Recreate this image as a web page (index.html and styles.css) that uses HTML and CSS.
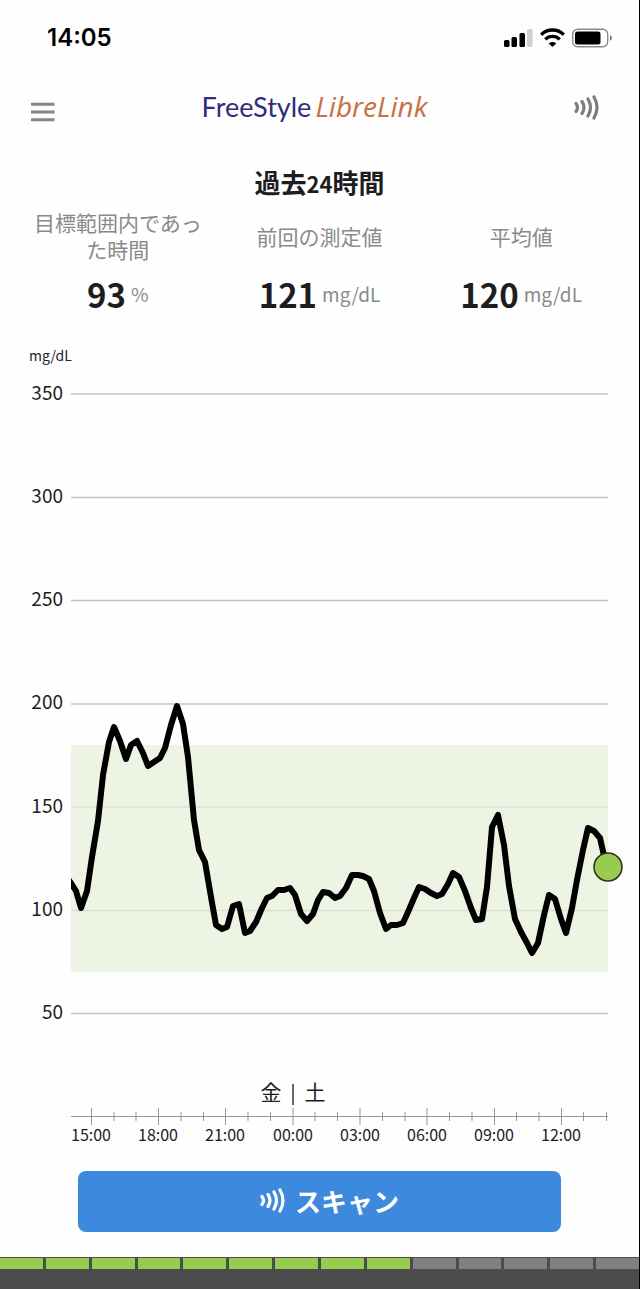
FILE: index.html
```html
<!DOCTYPE html>
<html lang="ja">
<head>
<meta charset="utf-8">
<meta name="viewport" content="width=device-width, initial-scale=1">
<title>FreeStyle LibreLink</title>
<link rel="stylesheet" href="styles.css">
</head>
<body>
<div class="app">
  <div class="status">
    <time class="clock">14:05</time>
    <svg class="status-icons" width="110" height="22" viewBox="0 0 110 22" aria-hidden="true">
      <rect x="0" y="13" width="5.5" height="7" rx="1.5"/>
      <rect x="7.5" y="10" width="5.5" height="10" rx="1.5"/>
      <rect x="15.5" y="6" width="5.5" height="14" rx="1.5"/>
      <rect x="23" y="2" width="5.5" height="18" rx="1.5" fill="#d0d0d0"/>
      <g fill="none" stroke="#000" stroke-width="3.4">
        <path d="M37.2 7.7a16 16 0 0 1 22.6 0"/>
        <path d="M41.3 12.4a10.2 10.2 0 0 1 14.4 0"/>
      </g>
      <path d="M48.5 20l-3.7-3.6a5.4 5.4 0 0 1 7.4 0z"/>
      <rect x="68.7" y="2.2" width="35" height="17.6" rx="5" fill="none" stroke="#8a8a8a" stroke-width="1.4"/>
      <rect x="71" y="4.5" width="25.5" height="13" rx="2.5"/>
      <path d="M106 8q4 3 0 6z" fill="#777"/>
    </svg>
  </div>

  <header class="header">
    <button class="icon-button" type="button" aria-label="メニュー">
      <svg width="24" height="20" viewBox="0 0 24 20"><path d="M0 2.2h23.5M0 10h23.5M0 17.8h23.5" stroke="#858585" stroke-width="3"/></svg>
    </button>
    <div class="logo"><span class="logo-free">FreeStyle</span><span class="logo-libre">LibreLink</span></div>
    <button class="icon-button scan-icon" type="button" aria-label="スキャン">
      <svg width="26" height="26" viewBox="0 0 26 26"><path d="M2 8.500q3 4 0 8M8 6.500q4 6 0 12M14 4q5 8.500 0 17M20 2q6 10.500 0 21" fill="none" stroke="currentColor" stroke-width="3.200" stroke-linecap="round"/></svg>
    </button>
  </header>

  <main class="main">
    <h1 class="title">過去<span class="title-number">24</span>時間</h1>
    <dl class="stats">
      <div class="stat">
        <dt class="stat-label">目標範囲内であった時間</dt>
        <dd class="stat-value"><strong>93</strong><span class="unit">%</span></dd>
      </div>
      <div class="stat">
        <dt class="stat-label">前回の測定値</dt>
        <dd class="stat-value"><strong>121</strong><span class="unit">mg/dL</span></dd>
      </div>
      <div class="stat">
        <dt class="stat-label">平均値</dt>
        <dd class="stat-value"><strong>120</strong><span class="unit">mg/dL</span></dd>
      </div>
    </dl>

    <svg class="chart" viewBox="0 340 639 810" role="img" aria-label="過去24時間のグルコース値">
      <text class="axis-unit" x="29" y="361">mg/dL</text>
      <g class="grid">
        <path d="M71 394H608M71 497.500H608M71 600.500H608M71 704H608M71 807H608M71 910.500H608M71 1013.500H608"/>
      </g>
      <rect class="target" x="71" y="745" width="537" height="227"/>
      <g class="y-labels">
        <text x="63" y="400">350</text>
        <text x="63" y="503">300</text>
        <text x="63" y="606">250</text>
        <text x="63" y="709">200</text>
        <text x="63" y="813">150</text>
        <text x="63" y="916">100</text>
        <text x="63" y="1019">50</text>
      </g>
      <svg x="71" y="680" width="560" height="320" viewBox="71 680 560 320">
        <polyline class="curve" points="68,879 71,883 76,891 81,908 87,891 92,857 98,821 103,775 109,742 114,727 120,741 126,759 131,745 137,741 143,753 148,766 154,762 160,758 165,748 171,725 177,706 183,724 188,757 194,820 199,850 205,862 211,897 216,925 222,929 227,927 233,906 239,904 245,933 250,931 256,922 262,908 267,898 272,896 278,890 284,890 290,888 295,895 301,914 307,921 313,914 318,900 323,892 329,893 335,898 340,896 346,888 352,875 358,875 363,876 369,879 374,891 380,913 386,929 391,925 397,925 403,923 408,912 414,898 419,887 425,889 431,893 437,896 442,894 448,884 453,873 459,877 465,891 471,908 476,920 482,919 487,887 492,827 498,815 504,845 509,886 515,919 521,932 527,943 532,953 538,943 544,915 549,895 555,899 561,919 566,933 572,908 577,880 583,850 588,828 594,831 600,838 605,860 608,867"/>
      </svg>
      <circle class="current" cx="608" cy="867" r="14"/>
      <g class="days">
        <text x="271" y="1100">金</text>
        <text x="315" y="1100">土</text>
      </g>
      <path class="day-line" d="M293 1084V1105"/>
      <path class="ticks" d="M71 1116.500H608M91.500 1108v17M114 1112v9M136 1112v9M158.500 1108v17M181 1112v9M203.500 1112v9M225.500 1108v17M248 1112v9M270.500 1112v9M293 1108v17M315 1112v9M337.500 1112v9M360 1108v17M382.500 1112v9M405 1112v9M427 1108v17M449.500 1112v9M472 1112v9M494.500 1108v17M516.500 1112v9M539 1112v9M561.500 1108v17M583.500 1112v9M606.500 1112v9"/>
      <g class="x-labels">
        <text x="91" y="1141">15:00</text>
        <text x="158" y="1141">18:00</text>
        <text x="225" y="1141">21:00</text>
        <text x="293" y="1141">00:00</text>
        <text x="360" y="1141">03:00</text>
        <text x="427" y="1141">06:00</text>
        <text x="494" y="1141">09:00</text>
        <text x="561" y="1141">12:00</text>
      </g>
    </svg>

    <button class="scan" type="button">
      <svg width="26" height="26" viewBox="0 0 26 26" aria-hidden="true"><path d="M2 8.500q3 4 0 8M8 6.500q4 6 0 12M14 4q5 8.500 0 17M20 2q6 10.500 0 21" fill="none" stroke="currentColor" stroke-width="3.200" stroke-linecap="round"/></svg>
      スキャン
    </button>
  </main>

  <footer class="sensor" aria-label="センサー残り日数">
    <div class="days-left">
      <i class="day on"></i><i class="day on"></i><i class="day on"></i><i class="day on"></i><i class="day on"></i><i class="day on"></i><i class="day on"></i><i class="day on"></i><i class="day on"></i><i class="day"></i><i class="day"></i><i class="day"></i><i class="day"></i><i class="day"></i>
    </div>
  </footer>
</div>
</body>
</html>
```
FILE: styles.css
```css
* {
  box-sizing: border-box;
}

body {
  margin: 0;
  background: #fefefe;
  color: #1d1d1f;
  font-family: "Noto Sans CJK JP", "Noto Sans", sans-serif;
}

.app {
  display: flex;
  flex-direction: column;
  min-height: 100vh;
  border-right: 1px solid #000;
}

.status {
  display: flex;
  align-items: center;
  justify-content: space-between;
  height: 76px;
  padding: 0 25px 0 47px;
}

.clock {
  color: #000;
  font: 600 24px/28px Inter, sans-serif;
}

.header {
  display: flex;
  align-items: center;
  justify-content: space-between;
  height: 64px;
  padding: 0 39px 0 31px;
}

.icon-button {
  display: flex;
  padding: 8px 0 0;
  border: 0;
  background: none;
  color: #7d7d7d;
}

.scan-icon {
  padding: 0;
}

.logo {
  display: flex;
  align-items: baseline;
  gap: 4px;
  padding-bottom: 3px;
  font: 27px/32px Lato, sans-serif;
}

.logo-free {
  color: #312c7c;
}

.logo-libre {
  color: #c96f43;
  font-family: "Open Sans", sans-serif;
  font-size: 28px;
  font-style: italic;
  font-weight: 500;
}

.main {
  display: flex;
  flex-direction: column;
  padding-bottom: 25px;
}

.title {
  margin: 24px 0 7px;
  font-size: 26px;
  font-weight: 700;
  line-height: 36px;
  text-align: center;
}

.title-number {
  font-size: 22px;
}

.stats {
  display: grid;
  grid-template-columns: repeat(3, 1fr);
  margin: 0;
  padding: 0 17px;
}

.stat {
  display: flex;
  flex-direction: column;
  text-align: center;
}

.stat-label {
  display: flex;
  flex: 1;
  align-items: center;
  justify-content: center;
  min-height: 56px;
  padding: 0 14px;
  color: #8a8a8a;
  font-size: 21px;
  line-height: 27px;
}

.stat-value {
  display: flex;
  align-items: center;
  justify-content: center;
  gap: 5px;
  margin: 9px 0 25px;
  line-height: 42px;
}

.stat-value strong {
  font-size: 33px;
  font-weight: 700;
}

.unit {
  color: #8a8a8a;
  font-size: 19px;
}

.chart {
  display: block;
  width: 100%;
}

.axis-unit {
  fill: #1d1d1f;
  font-size: 14px;
}

.grid path {
  stroke: #c4c4c4;
  stroke-width: 1.5;
}

.target {
  fill: #e6f0d9;
  fill-opacity: 0.7;
}

.y-labels text {
  fill: #1d1d1f;
  font-size: 19px;
  text-anchor: end;
}

.curve {
  fill: none;
  stroke: #000;
  stroke-width: 6;
  stroke-linejoin: round;
}

.current {
  fill: #99ca52;
  stroke: #25301a;
  stroke-width: 1.5;
}

.days text {
  fill: #1d1d1f;
  font-size: 21px;
  text-anchor: middle;
}

.day-line {
  stroke: #333;
  stroke-width: 1.5;
}

.ticks {
  fill: none;
  stroke: #999;
}

.x-labels text {
  fill: #1d1d1f;
  font-size: 16px;
  text-anchor: middle;
}

.scan {
  display: flex;
  align-items: center;
  justify-content: center;
  gap: 9px;
  margin: 21px 78px 0;
  padding: 11px 12px 13px 32px;
  border: 0;
  border-radius: 8px;
  background: #3d89de;
  color: #fff;
  font: 700 26px/37px "Noto Sans CJK JP", sans-serif;
}

.sensor {
  flex: 1;
  min-height: 32px;
  background: #4c4c4c;
}

.days-left {
  display: grid;
  grid-template-columns: repeat(14, 1fr);
  gap: 3px;
  padding-top: 1px;
}

.day {
  height: 11px;
  background: #808080;
}

.day.on {
  background: #98cc50;
}
```
